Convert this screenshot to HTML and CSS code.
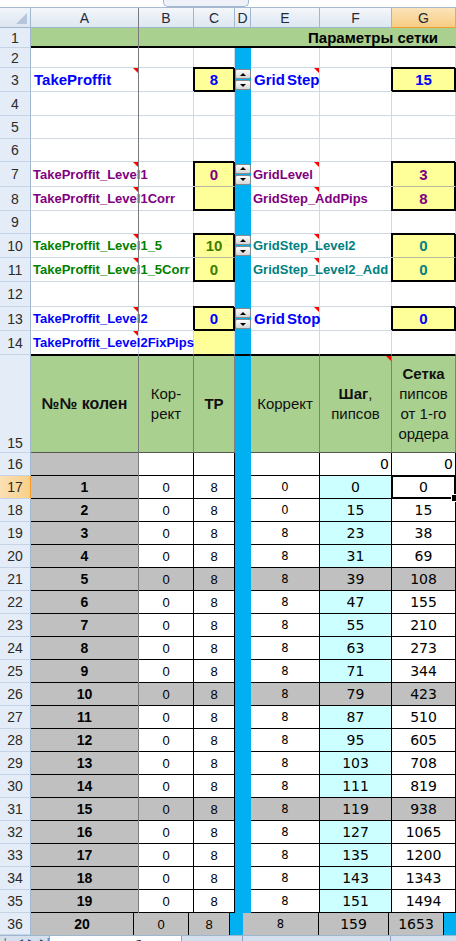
FILE: index.html
```html
<!DOCTYPE html>
<html lang="ru">
<head>
<meta charset="utf-8">
<title>Сводная таблица</title>
<link rel="stylesheet" href="styles.css">
</head>
<body>
<div class="topbar"><div class="fxbox"></div></div>
<div class="sheet">
  <div class="frz"></div>

  <div class="r h20">
    <div class="corner"></div><div class="ch">A</div><div class="ch">B</div><div class="ch">C</div><div class="ch">D</div><div class="ch">E</div><div class="ch">F</div><div class="ch on">G</div>
  </div>

  <div class="r h20">
    <div class="rh">1</div><div class="c grn thick"></div><div class="c grn thick title">Параметры сетки</div>
  </div>

  <div class="r h20">
    <div class="rh">2</div><div class="c"></div><div class="c"></div><div class="c"></div><div class="c d"></div><div class="c"></div><div class="c"></div><div class="c"></div>
  </div>

  <div class="r h24">
    <div class="rh">3</div>
    <div class="c cm"><span class="lb big blu">TakeProffit</span></div>
    <div class="c"></div>
    <div class="c y num bx blu">8</div>
    <div class="c d sp"><div class="sb up"></div><div class="sb dn"></div></div>
    <div class="c cm"><span class="lb big blu">Grid Step</span></div>
    <div class="c"></div>
    <div class="c y num bx blu">15</div>
  </div>

  <div class="r h24">
    <div class="rh">4</div><div class="c"></div><div class="c"></div><div class="c"></div><div class="c d"></div><div class="c"></div><div class="c"></div><div class="c"></div>
  </div>
  <div class="r h23">
    <div class="rh">5</div><div class="c"></div><div class="c"></div><div class="c"></div><div class="c d"></div><div class="c"></div><div class="c"></div><div class="c"></div>
  </div>
  <div class="r h23">
    <div class="rh">6</div><div class="c"></div><div class="c"></div><div class="c"></div><div class="c d"></div><div class="c"></div><div class="c"></div><div class="c"></div>
  </div>

  <div class="r h25">
    <div class="rh">7</div>
    <div class="c cm"><span class="lb pur">TakeProffit_Level1</span></div>
    <div class="c"></div>
    <div class="c y num bxt pur">0</div>
    <div class="c d sp"><div class="sb up"></div><div class="sb dn"></div></div>
    <div class="c cm"><span class="lb pur">GridLevel</span></div>
    <div class="c"></div>
    <div class="c y num bxt pur">3</div>
  </div>

  <div class="r h24">
    <div class="rh">8</div>
    <div class="c cm"><span class="lb pur">TakeProffit_Level1Corr</span></div>
    <div class="c"></div>
    <div class="c y num bxb pur"></div>
    <div class="c d"></div>
    <div class="c cm"><span class="lb pur">GridStep_AddPips</span></div>
    <div class="c"></div>
    <div class="c y num bxb pur">8</div>
  </div>

  <div class="r h23">
    <div class="rh">9</div><div class="c"></div><div class="c"></div><div class="c"></div><div class="c d"></div><div class="c"></div><div class="c"></div><div class="c"></div>
  </div>

  <div class="r h24">
    <div class="rh">10</div>
    <div class="c cm"><span class="lb dg">TakeProffit_Level1_5</span></div>
    <div class="c"></div>
    <div class="c y num bxt olv">10</div>
    <div class="c d sp"><div class="sb up"></div><div class="sb dn"></div></div>
    <div class="c cm"><span class="lb tl">GridStep_Level2</span></div>
    <div class="c"></div>
    <div class="c y num bxt tl">0</div>
  </div>

  <div class="r h24">
    <div class="rh">11</div>
    <div class="c cm"><span class="lb dg">TakeProffit_Level1_5Corr</span></div>
    <div class="c"></div>
    <div class="c y num bxb olv">0</div>
    <div class="c d"></div>
    <div class="c cm"><span class="lb tl">GridStep_Level2_Add</span></div>
    <div class="c"></div>
    <div class="c y num bxb tl">0</div>
  </div>

  <div class="r h25">
    <div class="rh">12</div><div class="c"></div><div class="c"></div><div class="c"></div><div class="c d"></div><div class="c"></div><div class="c"></div><div class="c"></div>
  </div>

  <div class="r h24">
    <div class="rh">13</div>
    <div class="c cm"><span class="lb blu">TakeProffit_Level2</span></div>
    <div class="c"></div>
    <div class="c y num bx blu">0</div>
    <div class="c d sp"><div class="sb up"></div><div class="sb dn"></div></div>
    <div class="c cm"><span class="lb big blu">Grid Stop</span></div>
    <div class="c"></div>
    <div class="c y num bx blu">0</div>
  </div>

  <div class="r h24 r14">
    <div class="rh">14</div>
    <div class="c cm over"><span class="lb blu">TakeProffit_Level2FixPips</span></div>
    <div class="c"></div>
    <div class="c y"></div>
    <div class="c d"></div>
    <div class="c"></div>
    <div class="c"></div>
    <div class="c"></div>
  </div>

  <div class="r h98">
    <div class="rh bot">15</div>
    <div class="c hd"><b class="big">№№ колен</b></div>
    <div class="c hd"><span>Кор-</span><span>рект</span></div>
    <div class="c hd"><b>TP</b></div>
    <div class="c d hdd"></div>
    <div class="c hd"><span>Коррект</span></div>
    <div class="c hd cm"><span><b>Шаг</b>,</span><span>пипсов</span></div>
    <div class="c hd"><b>Сетка</b><span>пипсов</span><span>от 1-го</span><span>ордера</span></div>
  </div>

  <div class="r h23 t">
    <div class="rh">16</div><div class="c na"></div><div class="c"></div><div class="c"></div><div class="c d"></div><div class="c"></div><div class="c ng ra">0</div><div class="c ng ra">0</div>
  </div>
  <div class="r h23 t">
    <div class="rh on">17</div><div class="c na">1</div><div class="c nb">0</div><div class="c nb">8</div><div class="c d"></div><div class="c ne">0</div><div class="c nf">0</div><div class="c ng sel">0</div>
  </div>
  <div class="r h23 t">
    <div class="rh">18</div><div class="c na">2</div><div class="c nb">0</div><div class="c nb">8</div><div class="c d"></div><div class="c ne">0</div><div class="c nf">15</div><div class="c ng">15</div>
  </div>
  <div class="r h23 t">
    <div class="rh">19</div><div class="c na">3</div><div class="c nb">0</div><div class="c nb">8</div><div class="c d"></div><div class="c ne">8</div><div class="c nf">23</div><div class="c ng">38</div>
  </div>
  <div class="r h23 t">
    <div class="rh">20</div><div class="c na">4</div><div class="c nb">0</div><div class="c nb">8</div><div class="c d"></div><div class="c ne">8</div><div class="c nf">31</div><div class="c ng">69</div>
  </div>
  <div class="r h23 t gy">
    <div class="rh">21</div><div class="c na">5</div><div class="c nb">0</div><div class="c nb">8</div><div class="c d"></div><div class="c ne">8</div><div class="c nf">39</div><div class="c ng">108</div>
  </div>
  <div class="r h23 t">
    <div class="rh">22</div><div class="c na">6</div><div class="c nb">0</div><div class="c nb">8</div><div class="c d"></div><div class="c ne">8</div><div class="c nf">47</div><div class="c ng">155</div>
  </div>
  <div class="r h23 t">
    <div class="rh">23</div><div class="c na">7</div><div class="c nb">0</div><div class="c nb">8</div><div class="c d"></div><div class="c ne">8</div><div class="c nf">55</div><div class="c ng">210</div>
  </div>
  <div class="r h23 t">
    <div class="rh">24</div><div class="c na">8</div><div class="c nb">0</div><div class="c nb">8</div><div class="c d"></div><div class="c ne">8</div><div class="c nf">63</div><div class="c ng">273</div>
  </div>
  <div class="r h23 t">
    <div class="rh">25</div><div class="c na">9</div><div class="c nb">0</div><div class="c nb">8</div><div class="c d"></div><div class="c ne">8</div><div class="c nf">71</div><div class="c ng">344</div>
  </div>
  <div class="r h23 t gy">
    <div class="rh">26</div><div class="c na">10</div><div class="c nb">0</div><div class="c nb">8</div><div class="c d"></div><div class="c ne">8</div><div class="c nf">79</div><div class="c ng">423</div>
  </div>
  <div class="r h23 t">
    <div class="rh">27</div><div class="c na">11</div><div class="c nb">0</div><div class="c nb">8</div><div class="c d"></div><div class="c ne">8</div><div class="c nf">87</div><div class="c ng">510</div>
  </div>
  <div class="r h23 t">
    <div class="rh">28</div><div class="c na">12</div><div class="c nb">0</div><div class="c nb">8</div><div class="c d"></div><div class="c ne">8</div><div class="c nf">95</div><div class="c ng">605</div>
  </div>
  <div class="r h23 t">
    <div class="rh">29</div><div class="c na">13</div><div class="c nb">0</div><div class="c nb">8</div><div class="c d"></div><div class="c ne">8</div><div class="c nf">103</div><div class="c ng">708</div>
  </div>
  <div class="r h23 t">
    <div class="rh">30</div><div class="c na">14</div><div class="c nb">0</div><div class="c nb">8</div><div class="c d"></div><div class="c ne">8</div><div class="c nf">111</div><div class="c ng">819</div>
  </div>
  <div class="r h23 t gy">
    <div class="rh">31</div><div class="c na">15</div><div class="c nb">0</div><div class="c nb">8</div><div class="c d"></div><div class="c ne">8</div><div class="c nf">119</div><div class="c ng">938</div>
  </div>
  <div class="r h23 t">
    <div class="rh">32</div><div class="c na">16</div><div class="c nb">0</div><div class="c nb">8</div><div class="c d"></div><div class="c ne">8</div><div class="c nf">127</div><div class="c ng">1065</div>
  </div>
  <div class="r h23 t">
    <div class="rh">33</div><div class="c na">17</div><div class="c nb">0</div><div class="c nb">8</div><div class="c d"></div><div class="c ne">8</div><div class="c nf">135</div><div class="c ng">1200</div>
  </div>
  <div class="r h23 t">
    <div class="rh">34</div><div class="c na">18</div><div class="c nb">0</div><div class="c nb">8</div><div class="c d"></div><div class="c ne">8</div><div class="c nf">143</div><div class="c ng">1343</div>
  </div>
  <div class="r h23 t">
    <div class="rh">35</div><div class="c na">19</div><div class="c nb">0</div><div class="c nb">8</div><div class="c d"></div><div class="c ne">8</div><div class="c nf">151</div><div class="c ng">1494</div>
  </div>

  <div class="r36">
    <div class="rh">36</div><div class="c na">20</div><div class="c nb">0</div><div class="c nb">8</div><div class="c d"></div><div class="c ne">8</div><div class="c ng">159</div><div class="c ng">1653</div><div class="c d"></div>
  </div>
</div>

<div class="tabs">
  <div class="nav"><span>|◀</span><span>◀</span><span>▶</span><span>▶|</span></div>
  <div class="tab act">Сводная таблица</div>
  <div class="tab">График</div>
  <div class="tab">Залоги и Цена пункта</div>
  <div class="tab">Волатильность</div>
</div>
</body>
</html>
```

FILE: styles.css
```css
* { box-sizing: border-box; }
html, body { margin: 0; padding: 0; }
body {
  width: 456px;
  height: 941px;
  overflow: hidden;
  background: #fff;
  font-family: "Liberation Sans", Arial, sans-serif;
  font-size: 13px;
  color: #000;
}

.topbar {
  height: 8px;
  border-bottom: 1px solid #a7b9d1;
  background: #fff;
  display: flex;
}
.fxbox {
  margin-left: 163px;
  width: 86px;
  height: 7px;
  background: #eef2f8;
  border: 1px solid #a3b6cf;
  border-top: none;
  border-radius: 0 0 5px 5px;
}

.sheet { position: relative; }
.frz {
  position: absolute;
  left: 138px;
  top: 0;
  width: 1px;
  height: 905px;
  background: #7a7a7a;
  z-index: 1;
}

.r {
  display: grid;
  grid-template-columns: 31px 108px 55px 41px 16px 69px 72px 64px;
}
.h20 { height: 20px; }
.h23 { height: 23px; }
.h24 { height: 24px; }
.h25 { height: 25px; }
.h98 { height: 98px; }

.c {
  position: relative;
  min-width: 0;
  display: flex;
  align-items: center;
  white-space: nowrap;
  border-right: 1px solid #d0d7e5;
  border-bottom: 1px solid #d0d7e5;
}

/* headers */
.corner {
  position: relative;
  background: linear-gradient(#f1f5fb, #dce5f1);
  border-right: 1px solid #9eb6ce;
  border-bottom: 1px solid #9eb6ce;
}
.corner::after {
  content: "";
  position: absolute;
  right: 3px;
  bottom: 3px;
  border-left: 11px solid transparent;
  border-bottom: 11px solid #b5c6dc;
}
.ch {
  display: flex;
  align-items: center;
  justify-content: center;
  background: linear-gradient(#f4f7fb, #dde6f1);
  border-right: 1px solid #9eb6ce;
  border-bottom: 1px solid #9eb6ce;
  font-size: 14px;
  color: #1f2a3a;
}
.ch.on {
  background: linear-gradient(#fbe3b9, #f7cd85);
  border-right-color: #f0a84a;
  border-bottom-color: #f29b2f;
}
.rh {
  display: flex;
  align-items: center;
  justify-content: center;
  background: #e4ecf7;
  border-right: 1px solid #9eb6ce;
  border-bottom: 1px solid #c5d3e6;
  font-size: 14px;
  color: #2b2b2b;
}
.rh.on {
  background: linear-gradient(90deg, #fbe0b3, #f8cf88);
  border-right-color: #f29b2f;
}
.rh.bot { align-items: flex-end; padding-bottom: 1px; }

/* row 1 */
.grn { background: #a9d08e; }
.thick { border-bottom: 2px solid #000; }
.c.grn { border-right-color: #a9d08e; }
.title {
  grid-column: 3 / -1;
  justify-content: flex-end;
  padding-right: 17px;
  font-weight: bold;
  font-size: 15px;
}

/* blue column D */
.d {
  background: #00b0f0;
  border-right-color: #00b0f0;
  border-bottom-color: #00b0f0;
}

/* labels */
.lb {
  padding-left: 2px;
  font-weight: bold;
  font-size: 13px;
}
.lb.big { font-size: 15px; padding-left: 3px; word-spacing: -2px; }
.blu { color: #0000ff; }
.pur { color: #800080; }
.dg { color: #008000; }
.olv { color: #3d8000; }
.tl { color: #008080; }
.over { z-index: 1; }

.cm::after {
  content: "";
  position: absolute;
  top: 0;
  right: 0;
  border-left: 5px solid transparent;
  border-top: 5px solid #ff0000;
}

/* yellow input boxes */
.y { background: #ffff99; }
.num {
  justify-content: center;
  font-weight: bold;
  font-size: 15px;
}
.bx {
  border-right-color: #000;
  border-bottom-color: #000;
  box-shadow: -1px -1px 0 #000, inset 1px 1px 0 #000, inset -1px -1px 0 #000;
}
.bxt {
  border-right-color: #000;
  border-bottom-color: #b8b8a0;
  box-shadow: -1px -1px 0 #000, inset 1px 1px 0 #000, inset -1px 0 0 #000;
}
.bxb {
  border-right-color: #000;
  border-bottom-color: #000;
  box-shadow: -1px 0 0 #000, inset 1px 0 0 #000, inset -1px -1px 0 #000;
}

/* spinners */
.sp {
  flex-direction: column;
  justify-content: center;
  gap: 1px;
}
.sb {
  width: 16px;
  height: 10px;
  border: 1px solid #8a8a8a;
  border-radius: 2px;
  background: linear-gradient(#fdfdfd, #d6d6d6);
  display: flex;
  align-items: center;
  justify-content: center;
}
.sb.up::before {
  content: "";
  border-left: 3px solid transparent;
  border-right: 3px solid transparent;
  border-bottom: 3px solid #000;
}
.sb.dn::before {
  content: "";
  border-left: 3px solid transparent;
  border-right: 3px solid transparent;
  border-top: 3px solid #000;
}

/* row 14 / 15 */
.r14 .c { border-bottom-color: #000; }
.hd {
  background: #a9d08e;
  border-top: 1px solid #000;
  border-right: 1px solid #7f7f7f;
  border-bottom: 1px solid #555;
  flex-direction: column;
  justify-content: center;
  align-items: center;
  text-align: center;
  font-size: 15px;
  line-height: 20px;
  color: #111;
}
.hd .big { font-size: 16px; }
.hdd { border-top: 1px solid #000; }

/* table */
.t .c {
  justify-content: center;
  border-right-color: #000;
  border-bottom-color: #000;
}
.t .d {
  border-right-color: #00b0f0;
  border-bottom-color: #00b0f0;
}
.na {
  background: #c0c0c0;
  font-weight: bold;
  font-size: 14px;
}
.nb { font-size: 13px; }
.ne { font-family: "DejaVu Sans", Verdana, sans-serif; font-size: 11.5px; }
.nf { font-family: "DejaVu Sans", Verdana, sans-serif; font-size: 14px; background: #ccffff; }
.ng { font-family: "DejaVu Sans", Verdana, sans-serif; font-size: 14px; }
.t .ra { justify-content: flex-end; padding-right: 2px; }
.t.gy .c { background: #c0c0c0; }
.t.gy .d { background: #00b0f0; }
.sel {
  box-shadow: -1px -1px 0 #000, inset 1px 1px 0 #000, inset -1px -1px 0 #000;
}
.sel::after {
  content: "";
  position: absolute;
  right: -4px;
  bottom: -4px;
  width: 6px;
  height: 6px;
  background: #000;
  border: 1px solid #fff;
  z-index: 2;
}

/* row 36 */
.r36 {
  display: grid;
  grid-template-columns: 31px 103px 55px 41px 13px 76px 70px 55px 12px;
  height: 22px;
}
.r36 .c {
  background: #c0c0c0;
  justify-content: center;
  border-right: 1px solid #000;
  border-bottom: none;
}
.r36 .d { background: #00b0f0; border-right-color: #00b0f0; }

/* sheet tabs */
.tabs {
  height: 24px;
  display: flex;
  align-items: stretch;
  background: #d5e0ef;
  border-top: 1px solid #9eb6ce;
  font-size: 13px;
}
.nav {
  width: 62px;
  display: flex;
  gap: 5px;
  padding: 1px 0 0 4px;
  font-size: 9px;
  color: #1f3d6e;
}
.tab {
  padding: 2px 8px 0;
  border-left: 1px solid #8ea4c2;
  color: #1f3d6e;
  white-space: nowrap;
}
.tab.act {
  width: 133px;
  background: #fff;
  font-weight: bold;
  color: #000;
  padding-left: 10px;
}
```
